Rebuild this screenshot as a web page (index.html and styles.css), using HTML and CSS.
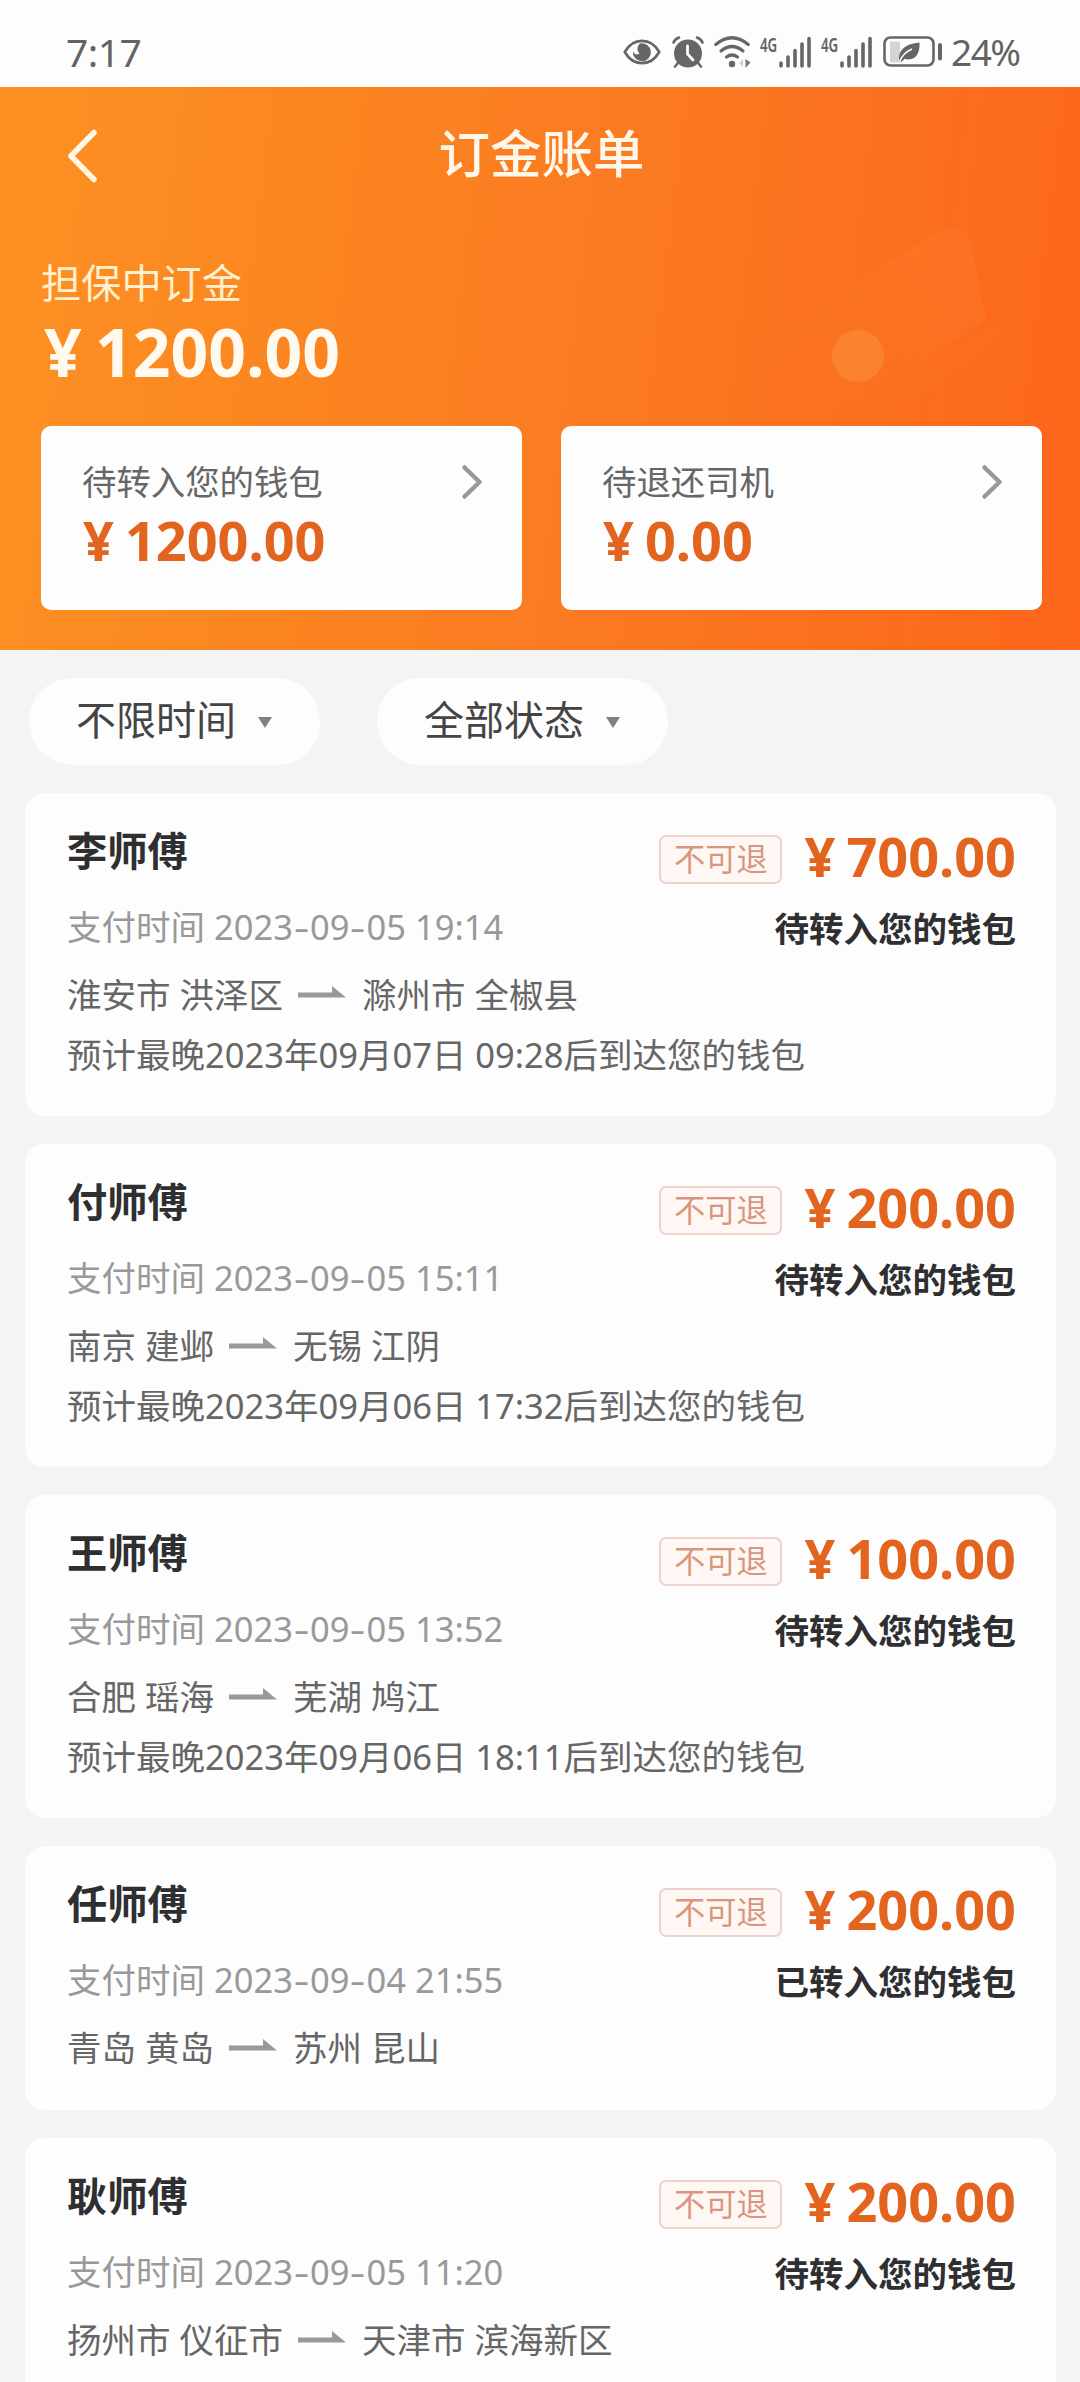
FILE: index.html
```
<!DOCTYPE html>
<html lang="zh-CN">
<head>
<meta charset="utf-8">
<title>订金账单</title>
<link rel="stylesheet" href="styles.css">
</head>
<body>
<div class="statusbar">
  <span class="clock">7:17</span>
  <div class="indicators">
    <svg class="ic-eye" width="38" height="28" viewBox="0 0 38 28"><path d="M1.800 14C10-.8 28-.8 36.200 14C28 28.800 10 28.800 1.800 14Z" fill="none" stroke="#666" stroke-width="2.600"/><path d="M17 5.500A9 9 0 1 1 10 13c1 3.500 5 4.500 6.500 2C13.500 13.500 14 8 17 5.500Z" fill="#666"/></svg>
    <svg class="ic-alarm" width="32" height="32" viewBox="0 0 32 32"><circle cx="16" cy="17.500" r="14" fill="#666"/><path d="M1.500 6.500Q3 3 7 1.500M30.500 6.500Q29 3 25 1.500M6 27l-3 3.500M26 27l3 3.500" fill="none" stroke="#666" stroke-width="2.600" stroke-linecap="round"/><path d="M15.500 10v8l5.500 6" fill="none" stroke="#fdfdfd" stroke-width="2.800" stroke-linecap="round"/></svg>
    <svg class="ic-wifi" width="38" height="32" viewBox="0 0 38 32"><g fill="none" stroke="#666" stroke-width="3.200" stroke-linecap="round"><path d="M1.800 8.500Q18 -5 34.200 8.500"/><path d="M7 15Q18 6 29 15"/><path d="M12.500 21Q18 17 23.500 21"/></g><circle cx="18" cy="28" r="3.200" fill="#666"/><path d="M29 23v8l-3.500-4Z" fill="#ccc"/><path d="M31.500 23v9l5-5.500Z" fill="#777"/></svg>
    <div class="mobile"><span class="net">4G</span><svg width="32" height="32" viewBox="0 0 32 32"><path d="M2 27v3M9 21v9M16 14.500V30M23 8V30M30 2.500V30" stroke="#666" stroke-width="3.600" stroke-linecap="round"/></svg></div>
    <div class="mobile"><span class="net">4G</span><svg width="32" height="32" viewBox="0 0 32 32"><path d="M2 27v3M9 21v9M16 14.500V30M23 8V30M30 2.500V30" stroke="#666" stroke-width="3.600" stroke-linecap="round"/></svg></div>
    <svg class="ic-battery" width="60" height="32" viewBox="0 0 60 32"><path d="M7 5.500h10v21H7Z" fill="#d4d4d4"/><rect x="1.500" y="1.500" width="49" height="28" rx="6" fill="none" stroke="#666" stroke-width="2.600"/><path d="M57 9v13.500" stroke="#666" stroke-width="4" stroke-linecap="round"/><path d="M36.500 6.500c.5 9-2.500 19-15 16.500l-3 3l-2.500-2c-.5-11 7-16 20.500-17.500Z" fill="#666"/><path d="M17 25q3-8 12-12" fill="none" stroke="#fdfdfd" stroke-width="1.600"/></svg>
    <span class="percent">24%</span>
  </div>
</div>

<header class="hero">
  <svg class="hero-art" width="280" height="260" viewBox="0 0 280 260">
    <defs><linearGradient id="ticket" x1="1" y1="0" x2="0" y2="1"><stop offset="0.100" stop-color="#fff" stop-opacity=".04"/><stop offset="0.900" stop-color="#fff" stop-opacity="0"/></linearGradient></defs>
    <path d="M0 120L160 20Q186 8 192 36L206 108L90 190L30 200Z" fill="url(#ticket)"/>
    <path d="M120 172L220 112L226 124L120 196Z" fill="#fff" fill-opacity=".02"/>
    <circle cx="78" cy="145" r="26" fill="#f8a050" fill-opacity=".35"/>
  </svg>
  <nav class="navbar">
    <svg class="back" width="34" height="56" viewBox="0 0 34 56"><path d="M28 4.500L5 28L28 51.500" fill="none" stroke="#fff8e6" stroke-width="5.500" stroke-linecap="round" stroke-linejoin="round"/></svg>
    <h1 class="title">订金账单</h1>
  </nav>
  <p class="hero-label">担保中订金</p>
  <p class="hero-amount">¥ 1200.00</p>
  <div class="wallets">
    <section class="wallet">
      <div class="wallet-head"><span>待转入您的钱包</span><svg width="22" height="36" viewBox="0 0 22 36"><path d="M3.500 3.500L18.500 18L3.500 32.500" fill="none" stroke="#999" stroke-width="4.500" stroke-linejoin="round" stroke-linecap="round"/></svg></div>
      <p class="money">¥ 1200.00</p>
    </section>
    <section class="wallet">
      <div class="wallet-head"><span>待退还司机</span><svg width="22" height="36" viewBox="0 0 22 36"><path d="M3.500 3.500L18.500 18L3.500 32.500" fill="none" stroke="#999" stroke-width="4.500" stroke-linejoin="round" stroke-linecap="round"/></svg></div>
      <p class="money">¥ 0.00</p>
    </section>
  </div>
</header>

<div class="filters">
  <div class="filter">不限时间<i class="caret"></i></div>
  <div class="filter">全部状态<i class="caret"></i></div>
</div>

<main class="bills">
  <article class="bill">
    <div class="info">
      <h2 class="name">李师傅</h2>
      <p class="time">支付时间 2023<span class="dash">-</span>09<span class="dash">-</span>05 19:14</p>
      <p class="route">淮安市 洪泽区<svg class="arrow" width="48" height="12" viewBox="0 0 48 12"><path d="M0 6.500H34V0L48 11.500H0Z" fill="#999"/></svg>滁州市 全椒县</p>
      <p class="eta">预计最晚2023年09月07日 09:28后到达您的钱包</p>
    </div>
    <div class="side"><div class="price"><span class="tag">不可退</span><span class="money">¥ 700.00</span></div><p class="state">待转入您的钱包</p></div>
  </article>
  <article class="bill">
    <div class="info">
      <h2 class="name">付师傅</h2>
      <p class="time">支付时间 2023<span class="dash">-</span>09<span class="dash">-</span>05 15:11</p>
      <p class="route">南京 建邺<svg class="arrow" width="48" height="12" viewBox="0 0 48 12"><path d="M0 6.500H34V0L48 11.500H0Z" fill="#999"/></svg>无锡 江阴</p>
      <p class="eta">预计最晚2023年09月06日 17:32后到达您的钱包</p>
    </div>
    <div class="side"><div class="price"><span class="tag">不可退</span><span class="money">¥ 200.00</span></div><p class="state">待转入您的钱包</p></div>
  </article>
  <article class="bill">
    <div class="info">
      <h2 class="name">王师傅</h2>
      <p class="time">支付时间 2023<span class="dash">-</span>09<span class="dash">-</span>05 13:52</p>
      <p class="route">合肥 瑶海<svg class="arrow" width="48" height="12" viewBox="0 0 48 12"><path d="M0 6.500H34V0L48 11.500H0Z" fill="#999"/></svg>芜湖 鸠江</p>
      <p class="eta">预计最晚2023年09月06日 18:11后到达您的钱包</p>
    </div>
    <div class="side"><div class="price"><span class="tag">不可退</span><span class="money">¥ 100.00</span></div><p class="state">待转入您的钱包</p></div>
  </article>
  <article class="bill">
    <div class="info">
      <h2 class="name">任师傅</h2>
      <p class="time">支付时间 2023<span class="dash">-</span>09<span class="dash">-</span>04 21:55</p>
      <p class="route">青岛 黄岛<svg class="arrow" width="48" height="12" viewBox="0 0 48 12"><path d="M0 6.500H34V0L48 11.500H0Z" fill="#999"/></svg>苏州 昆山</p>
    </div>
    <div class="side"><div class="price"><span class="tag">不可退</span><span class="money">¥ 200.00</span></div><p class="state">已转入您的钱包</p></div>
  </article>
  <article class="bill last">
    <div class="info">
      <h2 class="name">耿师傅</h2>
      <p class="time">支付时间 2023<span class="dash">-</span>09<span class="dash">-</span>05 11:20</p>
      <p class="route">扬州市 仪征市<svg class="arrow" width="48" height="12" viewBox="0 0 48 12"><path d="M0 6.500H34V0L48 11.500H0Z" fill="#999"/></svg>天津市 滨海新区</p>
    </div>
    <div class="side"><div class="price"><span class="tag">不可退</span><span class="money">¥ 200.00</span></div><p class="state">待转入您的钱包</p></div>
  </article>
</main>
</body>
</html>
```
FILE: styles.css
```
* { box-sizing: border-box; margin: 0; padding: 0; }
html { background: #f3f4f6; }
body {
  width: 1080px;
  height: 2382px;
  overflow: hidden;
  display: flex;
  flex-direction: column;
  background: #f3f4f6;
  color: #666;
  font-family: "Noto Sans", "Noto Sans CJK SC", sans-serif;
  white-space: nowrap;
}
svg { display: block; flex: none; }

.statusbar {
  height: 87px;
  flex: none;
  display: flex;
  justify-content: space-between;
  padding: 18px 59px 0 66px;
  background: #fdfdfd;
  color: #636363;
}
.clock { font-size: 39px; line-height: 68px; letter-spacing: -.5px; }
.indicators { display: flex; align-items: center; height: 68px; }
.ic-alarm { margin-left: 11px; }
.ic-wifi { margin-left: 10px; }
.mobile { display: flex; width: 51px; height: 32px; margin-left: 8px; }
.mobile + .mobile { margin-left: 10px; }
.net { width: 19px; font-size: 19px; line-height: 18px; font-weight: 600; transform: scaleX(.7); transform-origin: left; }
.ic-battery { margin-left: 11px; }
.percent { width: 70px; margin-left: 8px; font-size: 37px; line-height: 68px; letter-spacing: -1.500px; }

.hero {
  position: relative;
  height: 563px;
  flex: none;
  padding: 0 38px 0 41px;
  background: linear-gradient(97deg, #fd9123 0%, #fb8421 32%, #fb7b22 54%, #fb701d 78%, #fd661b 100%);
}
.hero-art { position: absolute; left: 780px; top: 124px; }
.navbar { position: relative; height: 136px; display: flex; align-items: center; }
.back { margin: 2px 0 0 25px; }
.title {
  position: absolute; left: 0; right: 0; top: 29px;
  text-align: center;
  font-size: 51.500px; line-height: 74px; font-weight: 500; color: #fff8ea;
}
.hero-label { margin-top: 30px; font-size: 40.200px; line-height: 60px; color: #fff0cf; }
.hero-amount { margin: 3px 0 0 3px; font-size: 66px; line-height: 70px; font-weight: 700; color: #fffaf0; word-spacing: -4px; }
.wallets { margin-top: 40px; display: grid; grid-template-columns: 481px 481px; justify-content: space-between; }
.wallet { height: 184px; padding: 31px 39px 0 41px; border-radius: 10px; background: #fdfdfd; }
.wallet-head { display: flex; justify-content: space-between; align-items: center; height: 50px; font-size: 34.400px; line-height: 50px; }
.money { font-size: 54px; line-height: 66px; font-weight: 700; color: #e2641f; word-spacing: -3px; }
.wallet .money { padding-left: 1px; }

.filters { display: flex; gap: 57px; height: 143px; flex: none; padding: 28px 29px 0; }
.filter {
  display: flex; align-items: center;
  width: 291px; height: 87px; padding: 0 0 3px 47px;
  border-radius: 44px; background: #fdfdfe;
  font-size: 40px; line-height: 60px; color: #444;
}
.caret { margin: 4px 0 0 22px; border: 7px solid transparent; border-top: 11px solid #808080; border-bottom: 0; }

.bills { display: flex; flex-direction: column; gap: 28px; padding: 0 24px 0 25px; }
.bill {
  display: flex; justify-content: space-between;
  height: 323px; flex: none;
  padding: 28px 40px 0 42px;
  border-radius: 20px; background: #fdfdfe;
}
.bill:nth-child(4) { height: 264px; }
.bill.last { height: 300px; }
.info { width: 0; font-size: 34.500px; }
.name { font-size: 40.200px; line-height: 60px; font-weight: 700; color: #2f2f31; }
.time { margin-top: 21px; line-height: 50px; color: #999; }
.dash { display: inline-block; padding: 0 3px; transform: scaleX(1.400); }
.route { display: flex; align-items: center; margin-top: 18px; line-height: 50px; }
.arrow { margin: -6px 16px 0 15px; }
.eta { margin-top: 10px; line-height: 50px; }
.side { display: flex; flex-direction: column; align-items: flex-end; }
.price { display: flex; align-items: center; gap: 22px; height: 70px; }
.tag {
  width: 123px; height: 49px; margin-top: 7px;
  border: 2px solid #eed3cd; border-radius: 7px; background: #fff7f3;
  font-size: 31.300px; line-height: 45px; text-align: center; color: #d9967f;
}
.state { margin-top: 13px; font-size: 34.500px; line-height: 50px; font-weight: 700; color: #2f2f31; }
```
